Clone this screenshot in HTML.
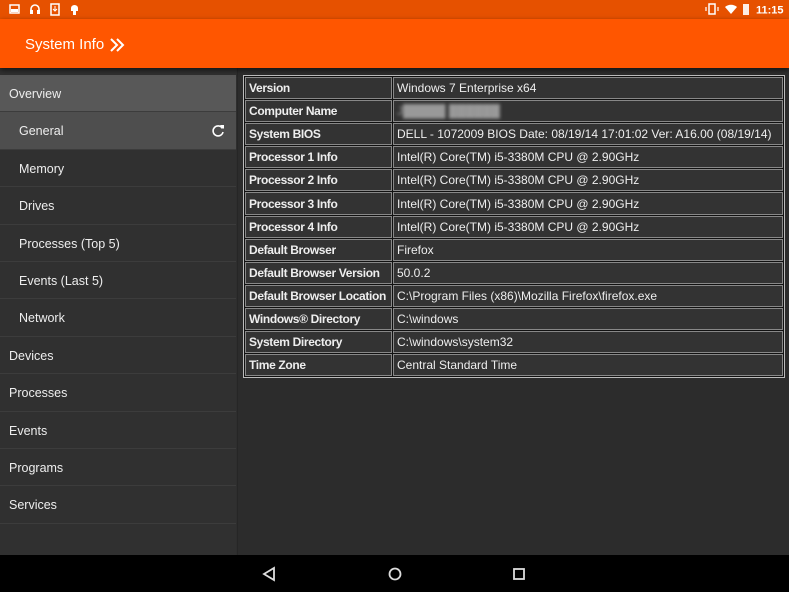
<!DOCTYPE html>
<html><head><style>
*{margin:0;padding:0;box-sizing:border-box}
html,body{width:789px;height:592px;overflow:hidden}
body{background:#2e2e2e;font-family:"Liberation Sans",sans-serif;position:relative}
#sb{position:absolute;top:0;left:0;width:789px;height:19px;background:#e65100;color:#fff;font-size:11px}
#tb{position:absolute;top:19px;left:0;width:789px;height:49px;background:#ff5600;box-shadow:0 2px 5px rgba(0,0,0,.6);z-index:2}
#tb span{position:absolute;left:25px;top:17px;color:#fff;font-size:15px}
#side{position:absolute;top:68px;left:0;width:236px;height:487px;background:#303030}
.it{position:absolute;left:0;width:236px;height:37.4px;border-bottom:1px solid #3c3c3c;color:#eee;font-size:12.5px;line-height:38px;padding-left:9px}
.sub{padding-left:19px}
#main{position:absolute;top:68px;left:237px;width:552px;height:487px;background:#2c2c2c;border-left:1px solid #262626}
table{position:absolute;left:5px;top:7px;width:542px;border:1px solid #bbb;border-spacing:1px;background:#111;font-size:12px;table-layout:fixed}
td{height:22.1px;border:1px solid #888;background:#333;color:#eee;padding:0 3px;white-space:nowrap;overflow:hidden;vertical-align:middle;line-height:14px}
td.k{font-weight:bold;letter-spacing:-0.35px}
#nav{position:absolute;top:555px;left:0;width:789px;height:37px;background:#000}
</style></head><body>
<div id="sb">
<svg width="789" height="19" style="position:absolute;left:0;top:0">
<rect x="10" y="5" width="9" height="8" fill="none" stroke="#fff" stroke-width="1.5"/><rect x="11" y="9" width="7" height="3" fill="#fff"/>
<path d="M31 12v-3a4 4 0 0 1 8 0v3" fill="none" stroke="#fff" stroke-width="1.6"/><rect x="30" y="10" width="3" height="4" fill="#fff"/><rect x="37" y="10" width="3" height="4" fill="#fff"/>
<rect x="51" y="4" width="8" height="11" fill="none" stroke="#fff" stroke-width="1.5"/><path d="M55 6v5M53 9l2 2 2-2" stroke="#fff" fill="none"/>
<path d="M71 8a3.5 3 0 0 1 7 0v3h-7z" fill="#fff"/><rect x="73" y="11" width="3" height="4" fill="#fff"/>
<rect x="709" y="4" width="6" height="10" fill="none" stroke="#fff" stroke-width="1.5"/><path d="M706 7v4M718 7v4" stroke="#fff" stroke-width="1.2"/>
<path d="M725 7l6 7 6-7a9 9 0 0 0-12 0z" fill="#fff"/>
<rect x="743" y="4" width="6" height="11" fill="#fff" opacity=".9"/>
<text x="756" y="13.5" fill="#fff" font-size="11" font-weight="bold" font-family="Liberation Sans">11:15</text>
</svg></div>
<div id="tb"><span>System Info</span><svg width="16" height="16" style="position:absolute;left:109px;top:18px"><path d="M2 2l6 6-6 6M8 2l6 6-6 6" fill="none" stroke="#fff" stroke-width="2"/></svg></div>
<div id="side">
<div class="it" style="top:7px;background:#585858">Overview</div>
<div class="it sub" style="top:44.4px;background:#4e4e4e">General<svg width="14" height="14" style="position:absolute;left:211px;top:12px"><path d="M11.5 4.5A5 5 0 1 0 12 8" fill="none" stroke="#fff" stroke-width="1.6"/><path d="M9 1h4v4z" fill="#fff"/></svg></div>
<div class="it sub" style="top:81.8px">Memory</div>
<div class="it sub" style="top:119.2px">Drives</div>
<div class="it sub" style="top:156.6px">Processes (Top 5)</div>
<div class="it sub" style="top:194px">Events (Last 5)</div>
<div class="it sub" style="top:231.4px">Network</div>
<div class="it" style="top:268.8px">Devices</div>
<div class="it" style="top:306.2px">Processes</div>
<div class="it" style="top:343.6px">Events</div>
<div class="it" style="top:381px">Programs</div>
<div class="it" style="top:418.4px">Services</div>
</div>
<div id="main"><table>
<colgroup><col style="width:147px"><col></colgroup>
<tr><td class="k">Version</td><td>Windows 7 Enterprise x64</td></tr>
<tr><td class="k">Computer Name</td><td><span style="color:#999;filter:blur(1.5px)">J█████ ██████</span></td></tr>
<tr><td class="k">System BIOS</td><td>DELL - 1072009 BIOS Date: 08/19/14 17:01:02 Ver: A16.00 (08/19/14)</td></tr>
<tr><td class="k">Processor 1 Info</td><td>Intel(R) Core(TM) i5-3380M CPU @ 2.90GHz</td></tr>
<tr><td class="k">Processor 2 Info</td><td>Intel(R) Core(TM) i5-3380M CPU @ 2.90GHz</td></tr>
<tr><td class="k">Processor 3 Info</td><td>Intel(R) Core(TM) i5-3380M CPU @ 2.90GHz</td></tr>
<tr><td class="k">Processor 4 Info</td><td>Intel(R) Core(TM) i5-3380M CPU @ 2.90GHz</td></tr>
<tr><td class="k">Default Browser</td><td>Firefox</td></tr>
<tr><td class="k">Default Browser Version</td><td>50.0.2</td></tr>
<tr><td class="k">Default Browser Location</td><td>C:\Program Files (x86)\Mozilla Firefox\firefox.exe</td></tr>
<tr><td class="k">Windows® Directory</td><td>C:\windows</td></tr>
<tr><td class="k">System Directory</td><td>C:\windows\system32</td></tr>
<tr><td class="k">Time Zone</td><td>Central Standard Time</td></tr>
</table></div>
<div id="nav"><svg width="789" height="37">
<path d="M264 19l10-6v12z" fill="none" stroke="#ddd" stroke-width="1.8"/>
<circle cx="395" cy="19" r="5.5" fill="none" stroke="#ddd" stroke-width="1.8"/>
<rect x="514" y="14" width="10" height="10" fill="none" stroke="#ddd" stroke-width="1.8"/>
</svg></div>
</body></html>
